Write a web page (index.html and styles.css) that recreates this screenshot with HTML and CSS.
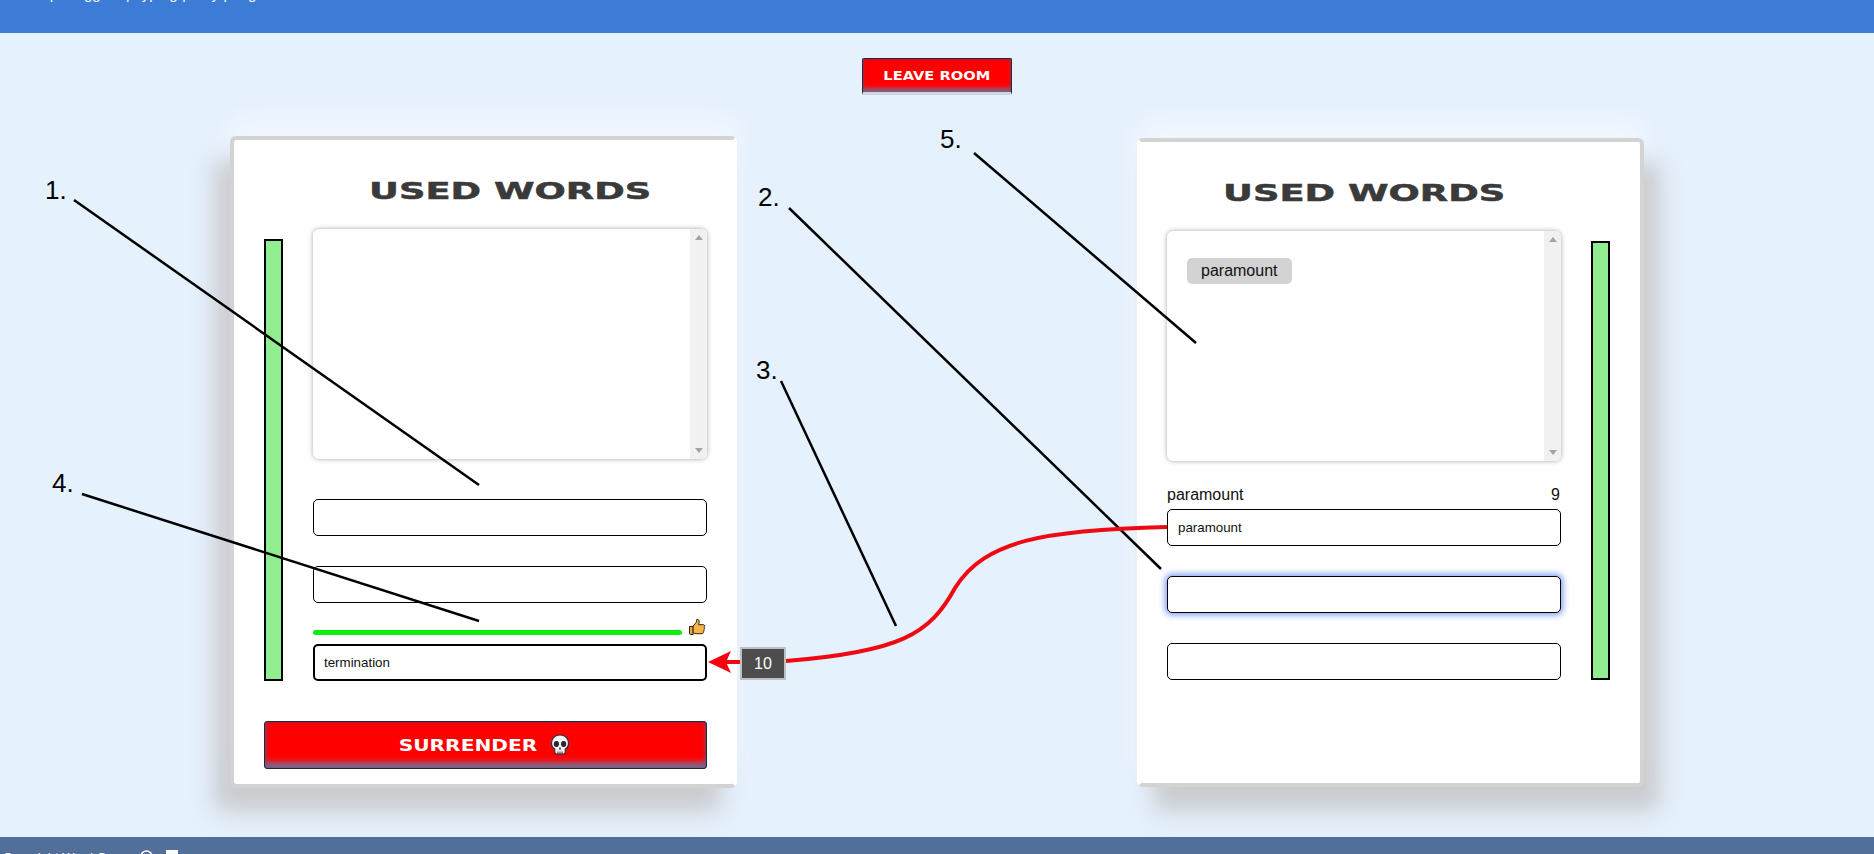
FILE: index.html
```html
<!DOCTYPE html>
<html lang="en">
<head>
  <meta charset="UTF-8">
  <title>Used Words</title>
  <link rel="stylesheet" href="styles.css">
</head>
<body>

<header class="top-bar">
  <p class="top-bar-text">Top Bloggers | Typing | Play | Login</p>
</header>

<main class="room">
  <button class="leave-btn"><span class="wide-text">LEAVE ROOM</span></button>

  <div class="board">
    <!-- Player 1 -->
    <section class="card card-left">
      <div class="card-row">
        <div class="health"></div>
        <div class="column">
          <h2 class="card-title"><span class="wide-title">USED WORDS</span></h2>
          <div class="word-box">
            <div class="word-list"></div>
            <div class="scrollbar"><i class="arrow-up"></i><i class="arrow-down"></i></div>
          </div>
          <input class="word-input first-input" type="text">
          <input class="word-input next-input" type="text">
          <div class="progress-row">
            <div class="progress"></div>
            <svg class="thumb" viewBox="0 0 18 18" width="18" height="18">
              <path d="M1.5 8.5h3.600v8H2.800a1.300 1.300 0 0 1-1.300-1.300z" fill="#f5a83c" stroke="#2b2116" stroke-width="1"/>
              <path d="M5.100 8.200 8 4.600c.6-.9.700-2 .8-3.200 1.500-.3 2.600.9 2.400 2.700l-.5 2.600h4.600c1.600 0 1.900 1.900.8 2.600.8.800.6 2-.3 2.500.5.800.2 1.800-.6 2.200.3 1-.3 1.700-1.300 1.700H8.200c-1.200 0-2-.4-3.100-.9z" fill="#f7b447" stroke="#2b2116" stroke-width="1"/>
            </svg>
          </div>
          <input class="word-input active-input" type="text" value="termination">
        </div>
      </div>
      <button class="surrender-btn">
        <span class="wide-text surrender-text">SURRENDER</span>
        <svg class="skull" viewBox="0 0 20 22" width="20" height="22">
          <path d="M10 1C4.800 1 1.500 4.400 1.500 9c0 2.900 1.200 4.900 3.200 6.100V18c0 1.200.8 2 2 2h6.600c1.200 0 2-.8 2-2v-2.900c2-1.200 3.200-3.200 3.200-6.100C18.500 4.400 15.200 1 10 1z" fill="#f2f2f2" stroke="#3b2b3b" stroke-width="1.200"/>
          <ellipse cx="6.400" cy="10" rx="2.600" ry="3" fill="#2c2430"/>
          <ellipse cx="13.600" cy="10" rx="2.600" ry="3" fill="#2c2430"/>
          <path d="M10 13l1.300 2.500H8.700z" fill="#2c2430"/>
          <path d="M8 17.500V20M10 17.500V20M12 17.500V20" stroke="#3b2b3b" stroke-width="1"/>
        </svg>
      </button>
    </section>

    <!-- Player 2 -->
    <section class="card card-right">
      <div class="card-row">
        <div class="column">
          <h2 class="card-title"><span class="wide-title">USED WORDS</span></h2>
          <div class="word-box">
            <div class="word-list"><span class="word-tag">paramount</span></div>
            <div class="scrollbar"><i class="arrow-up"></i><i class="arrow-down"></i></div>
          </div>
          <div class="word-info"><span>paramount</span><span>9</span></div>
          <input class="word-input" type="text" value="paramount">
          <input class="word-input next-input focus-input" type="text">
          <input class="word-input next-input" type="text">
        </div>
        <div class="health"></div>
      </div>
    </section>
  </div>

  <!-- Annotations drawn over the screenshot -->
  <svg class="notes" viewBox="0 0 1874 854" width="1874" height="854">
    <g class="note-lines">
      <line x1="74" y1="200" x2="479" y2="485"/>
      <line x1="789" y1="208" x2="1161" y2="569"/>
      <line x1="781" y1="381" x2="896" y2="626"/>
      <line x1="82" y1="494" x2="479" y2="621"/>
      <line x1="974" y1="153" x2="1196" y2="343"/>
    </g>
    <path class="red-curve" d="M1167 527C1045 530 985 540 955 588C930 634 900 652 786 661"/>
    <path class="red-curve" d="M741 662H724"/>
    <path class="red-head" d="M708 662L731 651L726 662L731 673Z"/>
    <g class="note-nums">
      <text x="45" y="199">1.</text>
      <text x="758" y="206">2.</text>
      <text x="756" y="379">3.</text>
      <text x="52" y="492">4.</text>
      <text x="940" y="148">5.</text>
    </g>
  </svg>
  <div class="score-chip">10</div>
</main>

<footer class="bottom-bar">
  <span class="bottom-bar-text">Copyright Word Game</span>
  <svg class="footer-ring" viewBox="0 0 13 13" width="13" height="13"><circle cx="6.500" cy="6.500" r="5.500" fill="none" stroke="white" stroke-width="1.500"/></svg>
  <span class="footer-box"></span>
</footer>

</body>
</html>
```

FILE: styles.css
```css
html, body {
  margin: 0;
  height: 100%;
  overflow: hidden;
  font-family: "Liberation Sans", Arial, sans-serif;
  background-color: #e6f1fe;
  color: #111;
}

body {
  display: flex;
  flex-direction: column;
  height: 854px;
}

/* Top and bottom bars, both cut off by the window */
.top-bar {
  height: 33px;
  background-color: #3c7bd6;
  overflow: hidden;
  flex: none;
}

.top-bar-text {
  margin: -15px 0 0 34px;
  font-size: 15px;
  color: white;
}

.bottom-bar {
  display: flex;
  align-items: flex-start;
  box-sizing: border-box;
  height: 17px;
  padding-top: 13px;
  background-color: #526f99;
  overflow: hidden;
  flex: none;
}

.bottom-bar-text {
  width: 140px;
  padding-left: 3px;
  box-sizing: border-box;
  font-size: 13px;
  color: white;
}

.footer-box {
  width: 12px;
  height: 12px;
  margin-left: 13px;
  background-color: white;
}

.room {
  position: relative;
  flex: 1;
}

/* Buttons */
.leave-btn {
  display: block;
  width: 150px;
  height: 37px;
  margin: 25px auto 0;
  padding: 0 0 1px;
  background-color: red;
  border: 1px solid #1c2a44;
  border-bottom: 3px solid #cfd6df;
  border-radius: 2px;
  box-shadow: inset 0 0 3px rgba(80, 60, 110, 0.7), inset 0 -5px 5px -2px #6d7fa8;
  color: white;
}

.wide-text {
  display: inline-block;
  font: bold 12px "DejaVu Sans", sans-serif;
  transform: scaleX(1.22);
}

.surrender-btn {
  display: flex;
  justify-content: center;
  align-items: center;
  gap: 12px;
  width: 443px;
  height: 48px;
  margin: 40px 0 0 30px;
  padding: 0 3px 0 0;
  background-color: red;
  border: 1px solid #1c2a44;
  border-radius: 3px;
  box-shadow: inset 0 0 4px rgba(80, 60, 110, 0.7), inset 0 -7px 7px -2px #6d7fa8;
  color: white;
}

.surrender-text {
  font-size: 16px;
  transform: scaleX(1.26);
  margin: 0 15px;
}

/* Cards */
.board {
  display: flex;
  justify-content: space-between;
  align-items: flex-start;
  padding: 0 230px;
  margin-top: 41px;
}

.card {
  box-sizing: border-box;
  width: 507px;
  height: 652px;
  background-color: white;
  border: 4px solid #d3d3d3;
  border-radius: 6px;
}

.card-left {
  border-right-color: white;
  box-shadow: -16px 24px 22px rgba(195, 195, 195, 0.8), 0 -18px 30px rgba(255, 255, 255, 0.45);
}

.card-right {
  margin-top: 2px;
  height: 649px;
  border-left-color: white;
  box-shadow: 16px 24px 22px rgba(195, 195, 195, 0.8), 0 -18px 30px rgba(255, 255, 255, 0.45);
}

.card-row {
  display: flex;
  align-items: flex-end;
  gap: 30px;
  padding: 0 0 0 30px;
}

.card-right .card-row {
  padding-left: 26px;
}

.column {
  display: flex;
  flex-direction: column;
  width: 394px;
  padding-top: 30px;
}

.health {
  box-sizing: border-box;
  width: 19px;
  height: 442px;
  background-color: #90ee90;
  border: 2px solid black;
  flex: none;
}

.card-right .health {
  height: 439px;
}

.card-title {
  margin: 0 0 17px;
  height: 42px;
  text-align: center;
  color: #3a3a3a;
}

.wide-title {
  display: inline-block;
  font: bold 23px/42px "DejaVu Sans", sans-serif;
  -webkit-text-stroke: 0.5px #3a3a3a;
  transform: scaleX(1.6);
}

/* Used words list */
.word-box {
  display: flex;
  height: 230px;
  border-radius: 6px;
  overflow: hidden;
  box-shadow: 0 0 5px rgba(0, 0, 0, 0.35);
  background-color: white;
}

.word-list {
  flex: 1;
  padding: 27px 0 0 20px;
}

.word-tag {
  display: inline-block;
  padding: 4px 14px;
  line-height: 18px;
  font-size: 16px;
  background-color: #d3d3d3;
  border-radius: 5px;
}

.scrollbar {
  width: 17px;
  display: flex;
  flex-direction: column;
  justify-content: space-between;
  align-items: center;
  padding: 6px 0;
  box-sizing: border-box;
  background-color: #f1f1f1;
}

.arrow-up {
  border: 4px solid transparent;
  border-top: 0;
  border-bottom: 5px solid #a3a3a3;
}

.arrow-down {
  border: 4px solid transparent;
  border-bottom: 0;
  border-top: 5px solid #a3a3a3;
}

/* Inputs */
.word-input {
  box-sizing: border-box;
  width: 100%;
  height: 37px;
  padding: 0 10px;
  font-family: "Liberation Sans", Arial, sans-serif;
  font-size: 13.33px;
  color: #111;
  background-color: white;
  border: 1px solid black;
  border-radius: 5px;
  outline: none;
}

.first-input {
  margin-top: 40px;
}

.next-input {
  margin-top: 30px;
}

.active-input {
  border-width: 2px;
  padding-left: 9px;
  margin-top: 8px;
}

.focus-input {
  box-shadow: 0 0 6px 2px #7f9cf5;
}

.word-info {
  display: flex;
  justify-content: space-between;
  height: 18px;
  line-height: 18px;
  margin: 25px 1px 5px 0;
  font-size: 16px;
}

.progress-row {
  display: flex;
  align-items: flex-end;
  gap: 6px;
  height: 18px;
  margin-top: 15px;
}

.progress {
  width: 369px;
  height: 5px;
  margin-bottom: 1px;
  background-color: #0dee0d;
  border-radius: 3px;
}

/* Overlay */
.notes {
  position: absolute;
  left: 0;
  top: -33px;
  pointer-events: none;
}

.note-lines line {
  stroke: black;
  stroke-width: 2.5;
}

.note-nums text {
  font-family: "Liberation Sans", Arial, sans-serif;
  font-size: 26px;
  fill: black;
}

.red-curve {
  fill: none;
  stroke: #ee0a12;
  stroke-width: 4;
}

.red-head {
  fill: #f5000f;
}

.score-chip {
  position: absolute;
  left: 740px;
  top: 614px;
  box-sizing: border-box;
  width: 46px;
  height: 33px;
  line-height: 29px;
  text-align: center;
  font-size: 16px;
  color: white;
  background-color: #4d4d4d;
  border: 2px solid #c0c0c0;
}
```
